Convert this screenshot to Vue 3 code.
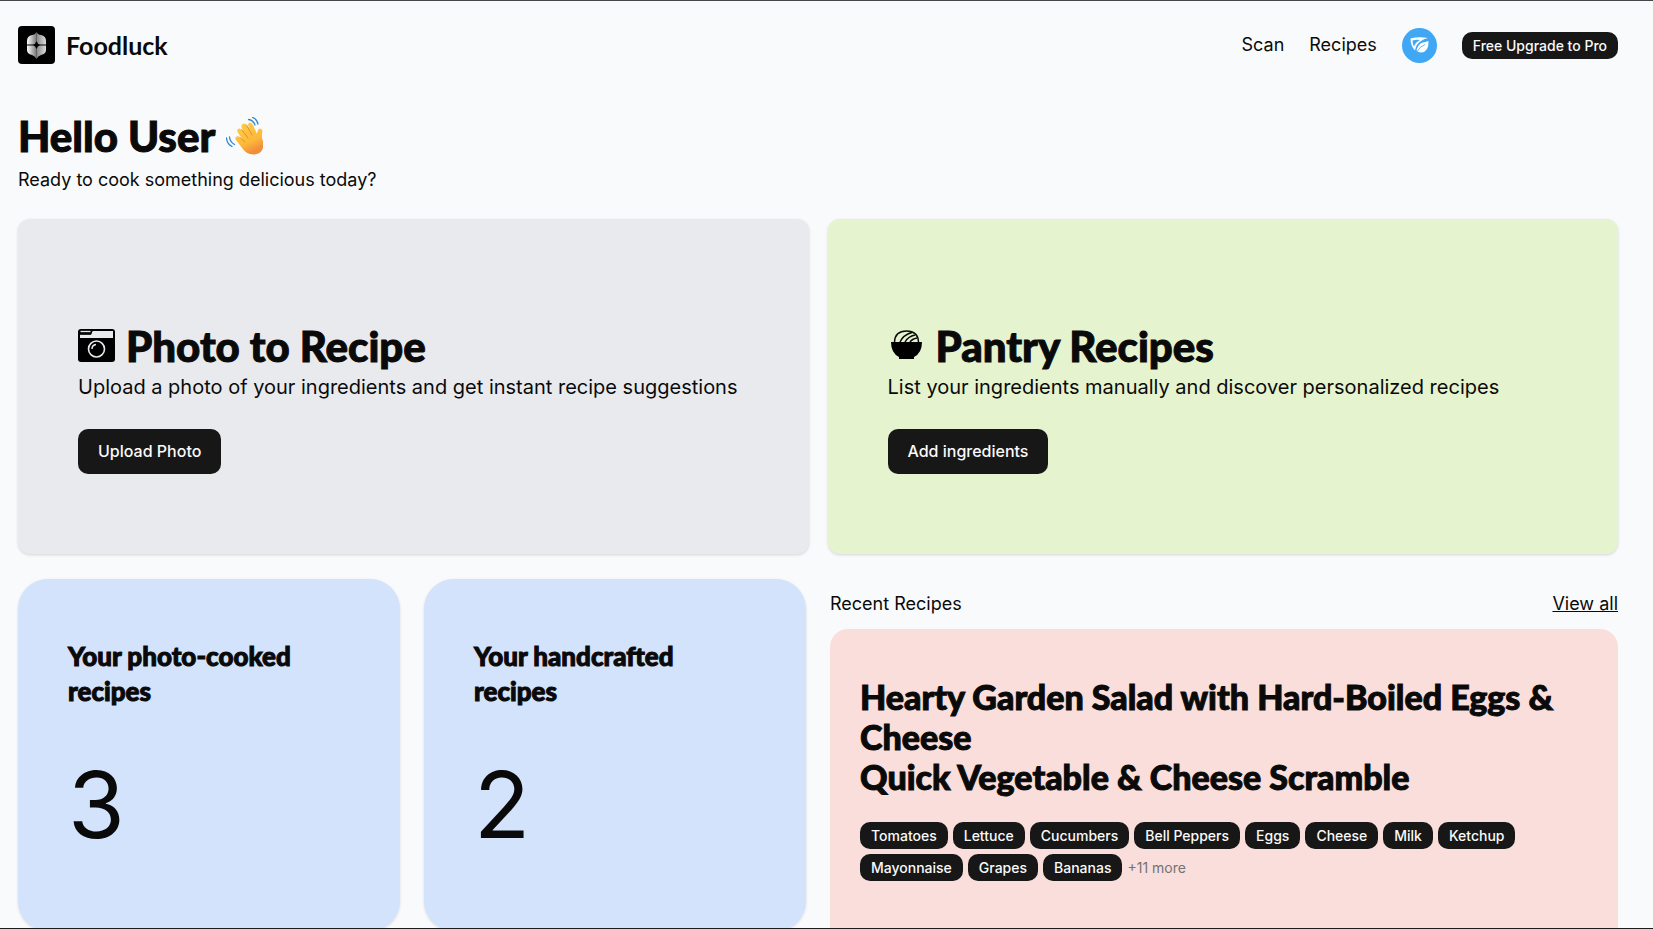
<template>
  <div class="page">
    <header class="header">
      <a class="brand" href="#">
        <svg class="brand-logo" viewBox="0 0 37 38" aria-hidden="true">
          <defs>
            <linearGradient id="petal-l" x1="0" y1="0" x2="1" y2="0">
              <stop offset="0" stop-color="#fff" />
              <stop offset="1" stop-color="#777" />
            </linearGradient>
            <linearGradient id="petal-r" x1="0" y1="0" x2="1" y2="0">
              <stop offset="0" stop-color="#888" />
              <stop offset="1" stop-color="#ddd" />
            </linearGradient>
          </defs>
          <rect width="37" height="38" rx="4" />
          <path d="M18.500 6 Q17 9 14 9 Q9 10 9 15 V18.500 H18.500 Z" fill="url(#petal-l)" />
          <path d="M18.500 6 Q20 9 23 9 Q28 10 28 15 V18.500 H18.500 Z" fill="url(#petal-r)" />
          <path d="M18.500 33 Q17 30 14 29 Q9 28 9 24 V19.500 H18.500 Z" fill="url(#petal-l)" />
          <path d="M18.500 33 Q20 30 23 29 Q28 28 28 24 V19.500 H18.500 Z" fill="url(#petal-r)" />
          <path d="M18.500 15 Q19.500 18 22 19 Q19.500 20 18.500 23 Q17.500 20 15 19 Q17.500 18 18.500 15 Z" />
        </svg>
        <span class="brand-name">Foodluck</span>
      </a>
      <nav class="nav">
        <a href="#">Scan</a>
        <a href="#">Recipes</a>
        <button class="avatar" type="button" aria-label="Account">
          <svg viewBox="0 0 35 35" aria-hidden="true">
            <path d="M8.500 10.500 Q16 8.500 26 10 Q21.500 11 19 13 Q14 16 13 22.500 Q8.500 18 8.500 10.500 Z" fill="#fff" />
            <path d="M10.500 12.500 Q14 11.500 18 12 Q13.500 14 12 18.500 Q10.500 16 10.500 12.500 Z" fill="#40a7f5" />
            <path d="M26.500 13 Q27 24 19 24.500 Q16 24.500 14.500 22.500 Q16 16.500 20 14.800 Q23.500 14 26.500 13 Z" fill="#fff" />
            <path d="M15.500 23 Q18 18.500 23 16.500" stroke="#40a7f5" stroke-width="0.800" fill="none" />
          </svg>
        </button>
        <button class="pill" type="button">Free Upgrade to Pro</button>
      </nav>
    </header>

    <section class="greeting">
      <h1 class="title">
        Hello User
        <svg class="wave" viewBox="0 0 37 38" aria-hidden="true">
          <defs>
            <linearGradient id="skin" x1="0" y1="0" x2="0.400" y2="1">
              <stop offset="0" stop-color="#ffcf4a" />
              <stop offset="0.700" stop-color="#fdb83a" />
              <stop offset="1" stop-color="#ef8f3c" />
            </linearGradient>
          </defs>
          <path
            d="M10 23 Q8.500 20.500 10.500 19.500 Q12 18.500 14 20.500 L17 23 L11.500 15 Q10.500 12 13 11.500 Q14.500 11 16 13 L17 14 L15.500 10 Q15 7 17.500 6.500 Q19.500 6 20.500 8 L23 11 L22 8 Q22 5 24.500 5.500 Q26 6 27 8 L31 17 Q31.500 12 34 11.500 Q36 11.500 36.500 14 Q35 20 37 24 V31 Q35 37 28 37.500 Q21 38 16 31 Z"
            fill="url(#skin)"
          />
          <path
            d="M16 13 L22 21 M20.500 8 L26 18 M14 20.500 L19 25"
            fill="none"
            stroke="#e69026"
            stroke-width="1"
            stroke-linecap="round"
          />
          <path
            d="M22.500 2.500 Q27 3 29 8 M26.500 0.500 Q31 2 32 7 M3.500 20 Q4 25 8.500 27.500 M0.500 21 Q1 27 6 29.500"
            fill="none"
            stroke="#2f88cf"
            stroke-width="1.300"
            stroke-linecap="round"
          />
        </svg>
      </h1>
      <p>Ready to cook something delicious today?</p>
    </section>

    <section class="actions">
      <article class="action action-photo">
        <h2 class="title">
          <svg class="action-icon" viewBox="0 0 37 37" aria-hidden="true">
            <rect y="1" width="37" height="33" rx="3" />
            <path d="M2 6.500 H13 L14.500 3 H35 V10 H2 Z" fill="#e9eaee" />
            <path d="M2 6 H12.500 L14 2.500" fill="none" stroke="#0a0a0a" stroke-width="1.500" />
            <path d="M2.500 3.500 H12.500" stroke="#e9eaee" stroke-width="1.300" />
            <circle cx="18.500" cy="21" r="8" fill="none" stroke="#e9eaee" stroke-width="1.600" />
            <path d="M14 21 Q14 17 18 16.500" fill="none" stroke="#e9eaee" stroke-width="1.500" />
          </svg>
          Photo to Recipe
        </h2>
        <p>Upload a photo of your ingredients and get instant recipe suggestions</p>
        <button type="button">Upload Photo</button>
      </article>
      <article class="action action-pantry">
        <h2 class="title">
          <svg class="action-icon" viewBox="0 0 37 37" aria-hidden="true">
            <path d="M3 14 H34 Q34 25 26 29 V31 H11 V29 Q3 25 3 14 Z" />
            <path
              d="M6.500 14 Q7 3 18.500 3 Q30 3 30.500 14 M12 14 Q15 7 24 4.500 M17 14 Q20 8.500 27 7 M22 14 Q24 11 29 10"
              fill="none"
              stroke="#0a0a0a"
              stroke-width="1.500"
            />
          </svg>
          Pantry Recipes
        </h2>
        <p>List your ingredients manually and discover personalized recipes</p>
        <button type="button">Add ingredients</button>
      </article>
    </section>

    <section class="overview">
      <article v-for="stat in stats" :key="stat.label" class="stat">
        <h3>{{ stat.label }}</h3>
        <p>{{ stat.count }}</p>
      </article>

      <div class="recent">
        <div class="recent-head">
          <span>Recent Recipes</span>
          <a href="#">View all</a>
        </div>
        <article class="recent-card">
          <h3 v-for="recipe in recipes" :key="recipe">{{ recipe }}</h3>
          <div class="tags">
            <span v-for="tag in ingredients" :key="tag" class="pill">{{ tag }}</span>
            <span class="more">+11 more</span>
          </div>
        </article>
      </div>
    </section>
  </div>
</template>

<script setup>
import { ref } from 'vue';

const stats = ref([
  { label: 'Your photo-cooked recipes', count: 3 },
  { label: 'Your handcrafted recipes', count: 2 }
]);

const recipes = ref([
  'Hearty Garden Salad with Hard-Boiled Eggs & Cheese',
  'Quick Vegetable & Cheese Scramble'
]);

const ingredients = ref([
  'Tomatoes',
  'Lettuce',
  'Cucumbers',
  'Bell Peppers',
  'Eggs',
  'Cheese',
  'Milk',
  'Ketchup',
  'Mayonnaise',
  'Grapes',
  'Bananas'
]);
</script>

<style>
body {
  background: #f9fafc;
}
</style>

<style scoped>
.page {
  box-sizing: border-box;
  height: 100vh;
  overflow: hidden;
  padding: 25px 35px 0 18px;
  border-top: 1px solid #45454a;
  border-bottom: 1px solid #1c1c1e;
  color: #0a0a0a;
  font-family: Inter, sans-serif;
  font-size: 18px;
  line-height: 28px;
}

h1, h2, h3, p {
  margin: 0;
}

h1, h2, h3 {
  font-family: Lato, sans-serif;
  font-weight: 900;
  -webkit-text-stroke: 1px currentColor;
}

a {
  color: inherit;
  text-decoration: none;
}

button {
  border: 0;
  font-family: inherit;
  cursor: pointer;
}

.header,
.brand,
.nav {
  display: flex;
  align-items: center;
}

.header {
  justify-content: space-between;
}

.brand {
  gap: 11px;
}

.brand-logo {
  width: 37px;
  height: 38px;
}

.brand-name {
  font-family: Lato, sans-serif;
  font-size: 25px;
  font-weight: 700;
}

.nav {
  gap: 25px;
}

.avatar {
  width: 35px;
  height: 35px;
  padding: 0;
  border-radius: 50%;
  background: #40a7f5;
}

.avatar svg {
  display: block;
}

.pill {
  padding: 0 11px;
  border-radius: 10px;
  background: #171717;
  color: #fafafa;
  font-size: 14px;
  font-weight: 500;
  line-height: 27px;
}

.title {
  display: flex;
  align-items: center;
  font-size: 42px;
  line-height: 48px;
}

.greeting {
  margin-top: 48px;
}

.greeting .title {
  gap: 11px;
}

.greeting p {
  margin-top: 6px;
}

.wave {
  width: 37px;
  height: 38px;
}

.actions {
  display: grid;
  grid-template-columns: 1fr 1fr;
  gap: 19px;
  margin-top: 25px;
}

.action {
  padding: 103px 40px 80px 60px;
  border-radius: 12px;
  box-shadow: 0 1px 3px rgba(0, 0, 0, 0.15);
}

.action-photo {
  background: #e9eaee;
}

.action-pantry {
  background: #e5f3ce;
}

.action .title {
  gap: 11px;
}

.action-icon {
  width: 37px;
  height: 37px;
}

.action p {
  font-size: 20px;
  line-height: 34px;
}

.action button {
  display: block;
  margin-top: 25px;
  padding: 0 20px;
  border-radius: 10px;
  background: #171717;
  color: #fafafa;
  font-size: 16px;
  font-weight: 500;
  line-height: 45px;
}

.overview {
  display: grid;
  grid-template-columns: repeat(4, 1fr);
  align-items: start;
  gap: 24px;
  margin-top: 25px;
}

.stat {
  padding: 60px 60px 78px 50px;
  border-radius: 30px;
  background: #d3e3fc;
  box-shadow: 0 1px 3px rgba(0, 0, 0, 0.12);
}

.stat h3 {
  font-size: 26px;
  line-height: 35px;
}

.stat p {
  margin-top: 48px;
  font-size: 92px;
  line-height: 96px;
}

.recent {
  grid-column: span 2;
}

.recent-head {
  display: flex;
  justify-content: space-between;
  padding: 11px 0;
}

.recent-head a {
  text-decoration: underline;
}

.recent-card {
  padding: 48px 30px;
  border-radius: 18px 18px 0 0;
  background: #f9dedb;
}

.recent-card h3 {
  font-size: 34px;
  line-height: 40px;
}

.tags {
  display: flex;
  flex-wrap: wrap;
  gap: 5px;
  margin-top: 25px;
}

.more {
  color: #737373;
  font-size: 14px;
  line-height: 27px;
}
</style>
